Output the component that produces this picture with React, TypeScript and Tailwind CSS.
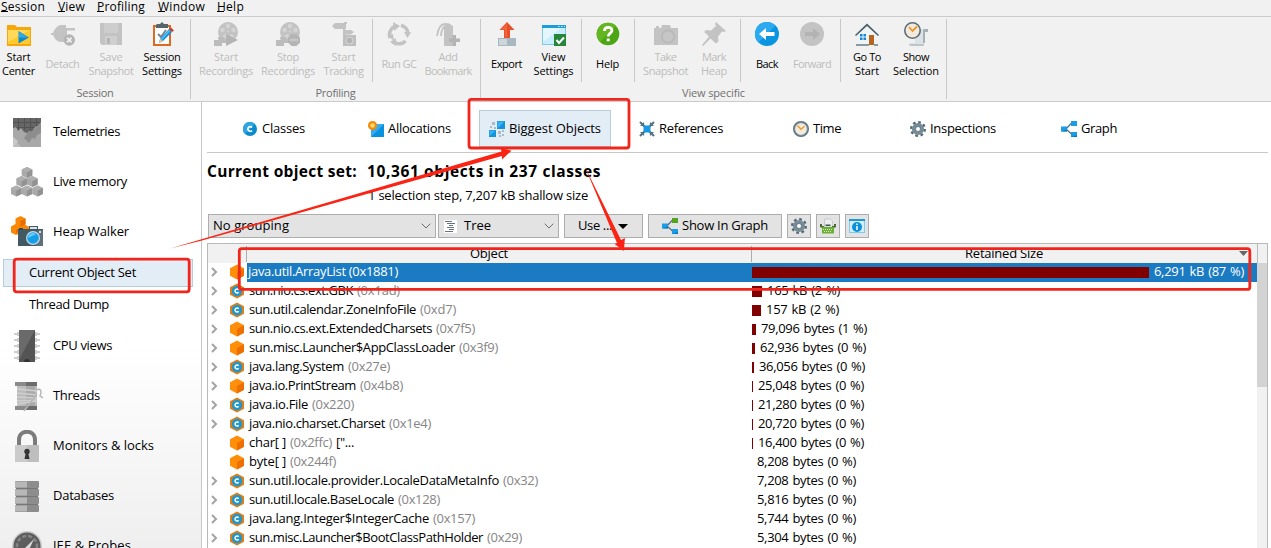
import { useLayoutEffect, useRef, useState, type ReactNode } from "react";

/** Single line of text whose tracking is set so that it fills `w` pixels. */
function T({ w, children, className = "" }: { w: number; children: string; className?: string }) {
  const ref = useRef<HTMLSpanElement>(null);
  const [spacing, setSpacing] = useState(0);
  useLayoutEffect(() => {
    const el = ref.current;
    if (!el) return;
    el.style.letterSpacing = "0px";
    const natural = el.getBoundingClientRect().width;
    const s = (w - natural) / children.length;
    el.style.letterSpacing = `${s}px`;
    setSpacing(s);
  }, [w, children]);
  return (
    <span ref={ref} className={`inline-block whitespace-pre ${className}`} style={{ letterSpacing: `${spacing}px` }}>
      {children}
    </span>
  );
}

function Svg({ s = 24, box = 24, children }: { s?: number; box?: number; children: ReactNode }) {
  return (
    <svg width={s} height={s} viewBox={`0 0 ${box} ${box}`} className="block shrink-0">
      {children}
    </svg>
  );
}

/* ---------- ribbon icons ---------- */
const G = "#c3c3c3";
const GD = "#b4b4b4";

const StartCenter = () => (
  <Svg>
    <path d="M0 3h8l2 2h14v19H0z" fill="#f5a70c" />
    <path d="M1 8h22v14H1z" fill="#ffca2c" />
    <path d="M1 8h22L1 20z" fill="#ffd95a" />
    <path d="M11.500 9l10.500 6.500-10.500 6z" fill="#0c8ad0" />
    <path d="M12 10l9.500 5.500H12z" fill="#35a9e6" />
  </Svg>
);
const Detach = () => (
  <Svg>
    <path d="M0 11h2C4 6 7 3 10 3h5v3h9v2.500h-8v5h5V16h-6v4h-5c-3 0-6-2-8-7H0z" fill={G} />
    <circle cx="18.300" cy="18" r="5.700" fill={GD} />
    <path d="M16 15.700l4.600 4.600m0-4.600L16 20.300" stroke="#f0f0f0" strokeWidth="1.800" />
  </Svg>
);
const Save = () => (
  <Svg>
    <path d="M1 1h22v22H3l-2-2z" fill={G} />
    <path d="M5 1h14v10H5z" fill="#cdcdcd" />
    <path d="M6 14h12v9H6z" fill="#cfcfcf" />
    <path d="M8 16h3v6H8z" fill={GD} />
  </Svg>
);
const SessionSettings = () => (
  <Svg>
    <path d="M3 3h18v21H3z" fill="#dc6b20" />
    <path d="M5 5h14v17H5z" fill="#fff" />
    <path d="M7 2h3l2-2 2 2h4v4H6V3z" fill="#56646c" />
    <path d="M8 12l3 3 5-7" stroke="#77858f" strokeWidth="2" fill="none" />
    <path d="M9 21l1-4L19 7l3 3-9 9z" fill="#1593dc" />
    <path d="M10 18l9-10 1 1-9 10z" fill="#5cc0f3" />
    <path d="M19 7l2-1.500 3 3L22 10z" fill="#ce3e2e" />
    <path d="M9 21l1-4 3 2z" fill="#f2c08e" />
  </Svg>
);
const Reel = ({ stop }: { stop?: boolean }) => (
  <Svg>
    <circle cx="14" cy="10" r="10" fill={G} />
    <g fill="#d4d4d4">
      <circle cx="14" cy="4" r="2.200" />
      <circle cx="8.500" cy="8" r="2.200" />
      <circle cx="19.500" cy="8" r="2.200" />
      <circle cx="11" cy="14.500" r="2.200" />
      <circle cx="17.500" cy="14.500" r="2.200" />
      <circle cx="14" cy="9.500" r="1" />
    </g>
    <path d="M0 18h8v6H0zM4 15h6l3 6H5z" fill="#bcbcbc" />
    {stop ? (
      <>
        <path d="M15.500 12h5l3.500 3.500v5L20.500 24h-5L12 20.500v-5z" fill={GD} />
        <path d="M14 18h8" stroke="#d0d0d0" strokeWidth="2.500" strokeDasharray="1.500 .7" />
      </>
    ) : (
      <path d="M12 12l12 6-12 6z" fill={GD} />
    )}
  </Svg>
);
const Tracking = () => (
  <Svg>
    <path d="M0 4l3-3h9V0h3v2h-1v5h-1v1h6l3 2-3 2.500h-5V13h10v11H11V7H3z" fill={G} />
    <path d="M11 13h13v11H11z" fill="#bebebe" />
    <circle cx="17.500" cy="18.500" r="4" fill="#d0d0d0" />
    <circle cx="17.500" cy="18.500" r="2.700" fill={GD} />
  </Svg>
);
const Recycle = () => (
  <Svg>
    <g fill="none" stroke={G} strokeWidth="3.600">
      <path d="M3.200 16A9.200 9.200 0 0 1 8 4.200" />
      <path d="M14 3.300a9.200 9.200 0 0 1 7 8.700" />
      <path d="M18.500 19a9.200 9.200 0 0 1-12 1" />
    </g>
    <path d="M6 0l7 4-6 5zM17 10h7l-3.500 6zM0 13l6-1 1 7z" fill={G} />
    <path d="M9 16v8l-6-4z" fill={G} />
  </Svg>
);
const Bookmark = () => (
  <Svg>
    <path d="M1 14C2 7 4 2 9 2c3 0 4 2 4 4M5 14C5 8 8 3 11 4" fill="none" stroke={G} strokeWidth="1.800" />
    <path d="M8 5l4-4 5 3v20H8z" fill={G} />
    <path d="M16.500 13h3.500v3.500h4V20h-4v4h-3.500v-4H13v-3.500h3.500z" fill={GD} />
  </Svg>
);
const Export = () => (
  <Svg>
    <path d="M3 16h18v8H3z" fill="#a9b8c0" />
    <path d="M4 17h8v6H4z" fill="#cbd5da" />
    <path d="M12 0l7.500 8H15v8H9V8H4.500z" fill="#e8502b" />
    <path d="M12 1v14h-2V7.500H6z" fill="#f0663c" />
  </Svg>
);
const ViewSettings = () => (
  <Svg>
    <path d="M0 3h24v20H0z" fill="#7cc9ea" />
    <path d="M1 6h22v16H1z" fill="#c9edfb" />
    <path d="M1 6h18L1 20z" fill="#e4f7fe" />
    <path d="M0 3h24v3H0z" fill="#1c9cd8" />
    <path d="M16 4.500h1.500m1.500 0h1.500m1.500 0H23" stroke="#d5f0fb" />
    <path d="M12 12h12v12H12z" fill="#27863c" />
    <path d="M14.500 18l2.500 3 5-5.500" stroke="#fff" strokeWidth="2" fill="none" />
  </Svg>
);
const Help = () => (
  <Svg>
    <circle cx="12" cy="12" r="11.300" fill="#4ca512" />
    <path d="M12 .7A11.300 11.300 0 0 0 4 20L20 4a11 11 0 0 0-8-3.300z" fill="#63b61f" />
    <path d="M8.500 9c0-5 7.500-4.500 7.500-.5 0 2.500-3.800 2.800-3.800 6" stroke="#fff" strokeWidth="2.800" fill="none" />
    <path d="M10.700 16.500h3v2.800h-3z" fill="#fff" />
  </Svg>
);
const Camera = () => (
  <Svg>
    <path d="M0 6h7l1-3h8l1 3h7v17H0z" fill={G} />
    <circle cx="14" cy="14.500" r="7" fill="#b8b8b8" />
    <circle cx="14" cy="14.500" r="5.300" fill="#c6c6c6" />
    <path d="M2 4h3v2H2z" fill={G} />
  </Svg>
);
const Pin = () => (
  <Svg>
    <path d="M14 0l10 9-2 1-2-.500-4 5 .500 5-2.500 2-5.500-5L1 24l-1-1 7-8.500L2 10l2-2 5 .500 5-4.500-1-2z" fill={G} />
  </Svg>
);
const Nav = ({ off }: { off?: boolean }) => (
  <Svg>
    <circle cx="12" cy="12" r="12" fill={off ? "#c3c3c3" : "#0b95e0"} />
    {!off && <path d="M12 0A12 12 0 0 0 3.500 20.500l17-17A12 12 0 0 0 12 0z" fill="#2baaf0" />}
    <path
      d={off ? "M20 12l-7-6v4H5v4h8v4z" : "M4 12l7-6v4h8.500v4H11v4z"}
      fill={off ? "#b3b3b3" : "#fff"}
    />
  </Svg>
);
const House = () => (
  <Svg>
    <path d="M3 12l9-9 9 9v11H3z" fill="#eef3f6" />
    <path d="M0 13L12 1.500 24 13l-1 1L12 4 1 14z" fill="#4d5e68" />
    <path d="M5 12h6v6H5z" fill="#1886d0" />
    <path d="M8 12v6M5 15h6" stroke="#e2f2fb" strokeWidth="1" />
    <path d="M14 13h5v10h-5z" fill="#b7651e" />
    <path d="M1 22h13v2H1zM19 22h4v2h-4z" fill="#8a9aa3" />
  </Svg>
);
const ShowSelection = () => (
  <Svg>
    <path d="M11 7h13v3h-4v14H5v-3h6z" fill="#dde2e5" />
    <path d="M20 7h4v3h-3v11h-2V8z" fill="#a5b0b7" />
    <path d="M5 22h15v2H7z" fill="#bdc5ca" />
    <circle cx="8.500" cy="8.500" r="7.700" fill="#f2ebdd" stroke="#5d6d77" strokeWidth="1.600" />
    <path d="M5 5l3.500 4L13 4.500" stroke="#ef9425" strokeWidth="1.800" fill="none" />
  </Svg>
);

/* ---------- small icons ---------- */
const ClassDot = () => (
  <Svg s={14} box={14}>
    <circle cx="7" cy="7" r="7" fill="#0b8bcb" />
    <path d="M7 0a7 7 0 0 0-5 12L12 2a7 7 0 0 0-5-2z" fill="#2da5de" />
    <path d="M9 5.600A2.300 2.300 0 1 0 9 8.400" stroke="#fff" strokeWidth="1.700" fill="none" />
  </Svg>
);
const Allocations = () => (
  <Svg s={16} box={16}>
    <path d="M3 3h13v13H3z" fill="#0a92df" />
    <path d="M3 3h13L3 16z" fill="#35acef" />
    <circle cx="4.500" cy="4.500" r="4.500" fill="#f08b0c" />
    <circle cx="4.500" cy="4.500" r="2.300" fill="#ffda66" />
  </Svg>
);
const Biggest = () => (
  <Svg s={16} box={16}>
    <path d="M8 0h8v8H8zM0 9h7v7H0z" fill="#1393dd" />
    <path d="M8.500 .5h7L8.500 7.500zM.5 9.500h6L.5 15z" fill="#3db0ee" />
    <path d="M3 1h3v3H3zM1 5h2v2H1zM5 6h2v2H5zM9 10h3v3H9zM13 9h2v2h-2zM10 14h2v2h-2zM13 13h2v2h-2z" fill="#a9bac6" />
  </Svg>
);
const References = () => (
  <Svg s={16} box={16}>
    <path d="M1 1l14 14M15 1L1 15" stroke="#536e7c" strokeWidth="2" />
    <path d="M1.500 4.500h3v-3M11.500 1.500v3h3M14.500 11.500h-3v3M4.500 14.500v-3h-3" stroke="#536e7c" strokeWidth="1.200" fill="none" />
    <path d="M4.500 4.500h7v7h-7z" fill="#1599e4" />
  </Svg>
);
const Clock = () => (
  <Svg s={16} box={16}>
    <circle cx="8" cy="8" r="7" fill="#f2ecdf" stroke="#5d717d" strokeWidth="2" />
    <circle cx="8" cy="8" r="6.200" fill="none" stroke="#aab9c2" strokeWidth=".7" />
    <path d="M4.500 4.500L8 8.200l3.500-3" stroke="#f09a30" strokeWidth="1.500" fill="none" />
  </Svg>
);
const Gear = () => (
  <Svg s={16} box={16}>
    <circle cx="8" cy="8" r="6.800" stroke="#536772" strokeWidth="2.400" strokeDasharray="2.670" fill="none" />
    <circle cx="8" cy="8" r="4.200" fill="none" stroke="#788c97" strokeWidth="3.800" />
    <circle cx="8" cy="8" r="2.500" fill="#fff" stroke="#475c68" strokeWidth=".7" />
  </Svg>
);
const Graph = ({ green }: { green?: boolean }) => (
  <Svg s={16} box={16}>
    <path d="M10 2.500L5 8l6 5.500" stroke="#526e7c" strokeWidth="1.200" fill="none" />
    <path d="M0 5.500h6v5H0zM10 11h6v5h-6z" fill="#1a9de8" />
    <path d="M10 0h6v5h-6z" fill={green ? "#53a51d" : "#1a9de8"} />
    <path d="M0 10.500h6v-2zM10 16h6v-2z" fill="#087bbd" />
  </Svg>
);
const TreeIcon = () => (
  <svg width="13" height="13" viewBox="0 0 13 13" className="block">
    <path d="M0 0h13v13H0z" fill="#fff" />
    <path d="M1 1.500h7M3 3.500h8M5 5.500h4M3 7.500h7M5 9.500h5M1 11.500h8" stroke="#66767f" />
  </svg>
);
const Typewriter = () => (
  <Svg s={16} box={16}>
    <path d="M4.500 1h6l2 2v6h-8z" fill="#eceeef" stroke="#b0b8bb" strokeWidth=".6" />
    <path d="M0 6h2v2h2v2H2L0 9zM16 6h-2v2h-2v2h2l2-1z" fill="#4d6a3a" />
    <path d="M2 9h12v6.500H2z" fill="#6bb035" />
    <path d="M3 11.500h10M4 13.500h8" stroke="#d9efc6" strokeDasharray="1 1" />
    <path d="M5.500 6.500h5V8h-5z" fill="#475159" />
  </Svg>
);
const InfoIcon = () => (
  <Svg s={16} box={16}>
    <path d="M0 1h16v14H0z" fill="#83cae8" />
    <path d="M1 3h14v11H1z" fill="#d3eefa" />
    <path d="M0 1h16v2H0z" fill="#1d9ad6" />
    <circle cx="8" cy="9" r="5" fill="#0c90da" />
    <path d="M8 5.500v1.500M8 8v4" stroke="#fff" strokeWidth="1.500" />
  </Svg>
);
const Cube = ({ cls }: { cls?: boolean }) => (
  <svg width="14" height="16" viewBox="0 0 14 16" className="block shrink-0">
    <path d="M7 .5l7 3.700v7.600l-7 3.700-7-3.700V4.200z" fill={cls ? "#d9811f" : "#ff8f0a"} />
    {cls ? (
      <>
        <circle cx="7" cy="8" r="5.200" fill="#2396c9" />
        <path d="M8.600 6.700a2 2 0 1 0 0 2.600" stroke="#fff" strokeWidth="1.500" fill="none" />
      </>
    ) : (
      <path d="M14 4.200v7.600l-7 3.700V8z" fill="#ee6f00" />
    )}
  </svg>
);
const Down = () => (
  <svg width="10" height="6" viewBox="0 0 10 6" className="block">
    <path d="M.7 .7L5 5 9.300 .7" stroke="#6e6e6e" strokeWidth="1" fill="none" />
  </svg>
);

/* ---------- sidebar icons ---------- */
const Telemetries = () => (
  <Svg s={32} box={32}>
    <path d="M2 2h28v29H2z" fill="#666" />
    <path d="M2 6.500h28M2 11.500h28M7.500 2v12M13.500 2v12M19.500 2v12M25.500 2v12" stroke="#525252" />
    <path d="M2 12l3-1 2 4 3-3 3 4 3 1 3-2 2 1 3-5 3-1 3-4v25H2z" fill="#a8a8a8" />
    <path d="M13 22l5-7 3 1 4-5 5-4v10l-4 2-2 4-3-1-3 5z" fill="#8d8d8d" />
    <path d="M2 21l8 10H2z" fill="#bcbcbc" />
    <path d="M2 21l5 4-5 6z" fill="#c8c8c8" />
  </Svg>
);
function GreyCube({ x, y }: { x: number; y: number }) {
  return (
    <g transform={`translate(${x} ${y})`}>
      <path d="M5.300 0l5.300 2.500v6L5.300 11 0 8.500v-6z" fill="#a9a9a9" />
      <path d="M10.600 2.500v6L5.300 11V5z" fill="#929292" />
      <path d="M5.300 0l5.300 2.500L5.300 5 0 2.500z" fill="#b0b0b0" />
    </g>
  );
}
const LiveMemory = () => (
  <Svg s={32} box={32}>
    <GreyCube x={10.700} y={1} />
    <GreyCube x={5.300} y={10} />
    <GreyCube x={16} y={10} />
    <GreyCube x={0} y={19.500} />
    <GreyCube x={10.700} y={19.500} />
    <GreyCube x={21.300} y={19.500} />
  </Svg>
);
const HeapWalker = () => (
  <Svg s={32} box={32}>
    <path d="M9.500 0l5 2.500V9l4 2v6l-4.500 2-4.500-2-4.500 2L0 16.500v-6L4.500 8V2.500z" fill="#fc8706" />
    <path d="M14.500 2.500V8l-5 3V5zM9.500 12l-4.500 6v-4z" fill="#e66d00" />
    <path d="M18 13v-3h9v3h5v17H7V13z" fill="#425863" />
    <path d="M19 13v-2h7v2z" fill="#dce3e6" />
    <path d="M8 12h4v2H8z" fill="#334851" />
    <path d="M27 14h5v16h-7z" fill="#5c717b" />
    <circle cx="22" cy="22" r="7" fill="#c7dce7" />
    <circle cx="22" cy="22" r="5.800" fill="#159fe9" />
    <path d="M17 22a5 5 0 0 1 8-4z" fill="#6dccfa" />
    <circle cx="29" cy="16" r="1" fill="#fff" />
  </Svg>
);
const Cpu = () => (
  <Svg s={32} box={32}>
    {[4, 10, 16, 22, 28].map((y) => (
      <path key={y} d={`M3 ${y - 1}h3v-1h20v1h3v2h-3v1H6v-1H3z`} fill="#cfcfcf" />
    ))}
    <path d="M8 0h16v32H8z" fill="#545454" />
    <path d="M8 0h16L8 30z" fill="#6a6a6a" />
    <path d="M13 32a3 3 0 0 1 6 0z" fill="#333" />
  </Svg>
);
const Spool = () => (
  <Svg s={32} box={32}>
    <path d="M6 5h20v22H6z" fill="#bcbcbc" />
    <path d="M15 5h9v22h-9z" fill="#a9a9a9" />
    <path d="M6 9l20 2M6 13l20 2M6 17l20 1M6 21l20-1M6 24l20-3" stroke="#cfcfcf" strokeWidth="1.300" />
    <path d="M4 2h22v4H4zM4 26h22v4H4z" fill="#6c6c6c" />
    <path d="M4 2h11v4H4zM4 26h11v4H4z" fill="#8a8a8a" />
    <path d="M13 31l13-17M25 10c5-2 6 1 4 6l3 2" stroke="#b6b6b6" strokeWidth="1.500" fill="none" />
  </Svg>
);
const Lock = () => (
  <Svg s={32} box={32}>
    <path d="M8 17v-7C8-1 24-1 24 10v7" stroke="#7c7c7c" strokeWidth="4" fill="none" />
    <path d="M4 15h24v17H4z" fill="#cbcbcb" />
    <path d="M16 15h12v17H16z" fill="#bebebe" />
    <circle cx="16" cy="21.500" r="2.700" fill="#333" />
    <path d="M15 22h2l1.500 7h-5z" fill="#333" />
  </Svg>
);
const Database = () => (
  <Svg s={32} box={32}>
    {[1, 9, 17, 25].map((y) => (
      <g key={y}>
        <rect x="4" y={y} width="24" height="7" rx="1" fill="#8d8d8d" />
        <path d={`M4 ${y + 0.5}h12v6H4z`} fill="#b7b7b7" />
      </g>
    ))}
    <path d="M5 8.500h22M5 16.500h22M5 24.500h22" stroke="#777" />
  </Svg>
);
const Gauge = () => (
  <Svg s={32} box={32}>
    <circle cx="16" cy="16" r="15" fill="#cacaca" />
    <circle cx="16" cy="16" r="13.500" fill="#5d5d5d" />
    <circle cx="16" cy="16" r="10" fill="none" stroke="#858585" strokeWidth="2.500" strokeDasharray="4 2" />
    <path d="M13 19l10-10-5 11z" fill="#d8d8d8" />
  </Svg>
);

/* ---------- ribbon ---------- */
type Line = [string, number];
function Cell({ w, icon, lines, off }: { w: string; icon: ReactNode; lines: Line[]; off?: boolean }) {
  return (
    <div className={`flex shrink-0 flex-col items-center pt-[5px] ${w} ${off ? "text-[#bcbcbc]" : "text-black"}`}>
      {icon}
      <div className="flex h-[36px] flex-col items-center justify-center text-[11px] leading-[14px]">
        {lines.map(([t, n]) => (
          <T key={t} w={n}>{t}</T>
        ))}
      </div>
    </div>
  );
}
const Sep = () => <div className="mt-[2px] h-[63px] w-px shrink-0 bg-[#c8c8c8]" />;
function Group({ w, label, lw, children }: { w: string; label: string; lw: number; children: ReactNode }) {
  return (
    <div className={`flex shrink-0 flex-col ${w}`}>
      <div className="flex h-[67px]">{children}</div>
      <div className="flex h-[16px] items-center justify-center pt-px text-[11px] leading-[15px] text-[#707070]">
        <T w={lw}>{label}</T>
      </div>
    </div>
  );
}
const LongSep = () => <div className="mt-[2px] h-[80px] w-px shrink-0 bg-[#c8c8c8]" />;

function Ribbon() {
  return (
    <div className="flex h-[86px] shrink-0 border-y border-[#cbcbcb] bg-[#f1f1f1]">
      <Group w="w-[190px]" label="Session" lw={37}>
        <Cell w="w-[37px]" icon={<StartCenter />} lines={[["Start", 24], ["Center", 33]]} />
        <Cell w="w-[51px]" off icon={<Detach />} lines={[["Detach", 34]]} />
        <Cell w="w-[46px]" off icon={<Save />} lines={[["Save", 23], ["Snapshot", 45]]} />
        <Cell w="w-[56px]" icon={<SessionSettings />} lines={[["Session", 37], ["Settings", 40]]} />
      </Group>
      <LongSep />
      <Group w="w-[289px]" label="Profiling" lw={40}>
        <Cell w="w-[70px]" off icon={<Reel />} lines={[["Start", 24], ["Recordings", 54]]} />
        <Cell w="w-[54px]" off icon={<Reel stop />} lines={[["Stop", 22], ["Recordings", 54]]} />
        <Cell w="w-[57px]" off icon={<Tracking />} lines={[["Start", 24], ["Tracking", 40]]} />
        <Sep />
        <Cell w="w-[52px]" off icon={<Recycle />} lines={[["Run GC", 35]]} />
        <Cell w="w-[46px]" off icon={<Bookmark />} lines={[["Add", 19], ["Bookmark", 47]]} />
      </Group>
      <LongSep />
      <Group w="w-[465px]" label="View specific" lw={63}>
        <Cell w="w-[51px]" icon={<Export />} lines={[["Export", 31]]} />
        <Cell w="w-[49px] pr-[6px]" icon={<ViewSettings />} lines={[["View", 24], ["Settings", 40]]} />
        <Sep />
        <Cell w="w-[52px] pr-px" icon={<Help />} lines={[["Help", 23]]} />
        <Sep />
        <Cell w="w-[61px]" off icon={<Camera />} lines={[["Take", 22], ["Snapshot", 45]]} />
        <Cell w="w-[44px] pr-[8px]" off icon={<Pin />} lines={[["Mark", 24], ["Heap", 26]]} />
        <Sep />
        <Cell w="w-[52px]" icon={<Nav />} lines={[["Back", 22]]} />
        <Cell w="w-[47px] pr-[9px]" off icon={<Nav off />} lines={[["Forward", 38]]} />
        <Sep />
        <Cell w="w-[52px]" icon={<House />} lines={[["Go To", 28], ["Start", 24]]} />
        <Cell w="w-[46px]" icon={<ShowSelection />} lines={[["Show", 26], ["Selection", 46]]} />
      </Group>
      <LongSep />
    </div>
  );
}

function MenuItem({ t, w, m }: { t: string; w: number; m: string }) {
  return (
    <div className={`relative flex h-[14px] ${m}`}>
      <T w={w}>{t}</T>
      <span className="absolute bottom-[2px] left-0 h-px w-[7px] bg-black" />
    </div>
  );
}

/* ---------- sidebar ---------- */
function Side({ icon, t, w }: { icon: ReactNode; t: string; w: number }) {
  return (
    <div className="flex h-[50px] shrink-0 items-center gap-[10px] pl-[11px]">
      {icon}
      <T w={w}>{t}</T>
    </div>
  );
}
function Sidebar() {
  return (
    <div className="flex w-[202px] shrink-0 flex-col overflow-hidden border-r border-[#c8c8c8] bg-linear-to-b from-white from-55% to-[#efefef] pt-[5px] text-[13px]">
      <Side icon={<Telemetries />} t="Telemetries" w={67} />
      <Side icon={<LiveMemory />} t="Live memory" w={74} />
      <Side icon={<HeapWalker />} t="Heap Walker" w={76} />
      <div className="mx-[3px] my-[2px] flex h-[28px] w-[190px] shrink-0 items-center border border-[#b5ceda] bg-[#e3edf6] pl-[25px]">
        <T w={107}>Current Object Set</T>
      </div>
      <div className="flex h-[32px] shrink-0 items-center pl-[29px]">
        <T w={80}>Thread Dump</T>
      </div>
      <Side icon={<Cpu />} t="CPU views" w={59} />
      <Side icon={<Spool />} t="Threads" w={47} />
      <Side icon={<Lock />} t="Monitors & locks" w={101} />
      <Side icon={<Database />} t="Databases" w={61} />
      <Side icon={<Gauge />} t="JEE & Probes" w={78} />
    </div>
  );
}

/* ---------- main panel ---------- */
function Tab({ icon, t, w, cls }: { icon: ReactNode; t: string; w: number; cls: string }) {
  return (
    <div className={`flex h-[37px] shrink-0 items-center gap-[4px] ${cls}`}>
      {icon}
      <T w={w}>{t}</T>
    </div>
  );
}

type Row = { n: string; nw: number; a?: string; aw?: number; cls?: boolean; leaf?: boolean; tail?: string; bar: number; s: string; sw: number };
const rows: Row[] = [
  { n: "java.util.ArrayList (0x1881)", nw: 150, bar: 397, s: "6,291 kB (87 %)", sw: 90 },
  { n: "sun.nio.cs.ext.GBK", nw: 104, a: "(0x1ad)", aw: 43, cls: true, bar: 10, s: "165 kB (2 %)", sw: 73 },
  { n: "sun.util.calendar.ZoneInfoFile", nw: 167, a: "(0xd7)", aw: 36, cls: true, bar: 9, s: "157 kB (2 %)", sw: 73 },
  { n: "sun.nio.cs.ext.ExtendedCharsets", nw: 183, a: "(0x7f5)", aw: 39, bar: 4, s: "79,096 bytes (1 %)", sw: 106 },
  { n: "sun.misc.Launcher$AppClassLoader", nw: 206, a: "(0x3f9)", aw: 39, bar: 3, s: "62,936 bytes (0 %)", sw: 106 },
  { n: "java.lang.System", nw: 95, a: "(0x27e)", aw: 42, cls: true, bar: 2, s: "36,056 bytes (0 %)", sw: 106 },
  { n: "java.io.PrintStream", nw: 107, a: "(0x4b8)", aw: 43, bar: 1, s: "25,048 bytes (0 %)", sw: 106 },
  { n: "java.io.File", nw: 59, a: "(0x220)", aw: 42, cls: true, bar: 1, s: "21,280 bytes (0 %)", sw: 106 },
  { n: "java.nio.charset.Charset", nw: 136, a: "(0x1e4)", aw: 42, cls: true, bar: 1, s: "20,720 bytes (0 %)", sw: 106 },
  { n: "char[ ]", nw: 37, a: "(0x2ffc)", aw: 42, leaf: true, tail: '["...', bar: 1, s: "16,400 bytes (0 %)", sw: 106 },
  { n: "byte[ ]", nw: 37, a: "(0x244f)", aw: 46, leaf: true, bar: 0, s: "8,208 bytes (0 %)", sw: 99 },
  { n: "sun.util.locale.provider.LocaleDataMetaInfo", nw: 250, a: "(0x32)", aw: 35, cls: true, bar: 0, s: "7,208 bytes (0 %)", sw: 99 },
  { n: "sun.util.locale.BaseLocale", nw: 145, a: "(0x128)", aw: 42, cls: true, bar: 0, s: "5,816 bytes (0 %)", sw: 99 },
  { n: "java.lang.Integer$IntegerCache", nw: 180, a: "(0x157)", aw: 42, cls: true, bar: 0, s: "5,744 bytes (0 %)", sw: 99 },
  { n: "sun.misc.Launcher$BootClassPathHolder", nw: 234, a: "(0x29)", aw: 35, cls: true, bar: 0, s: "5,304 bytes (0 %)", sw: 99 },
];

function TableRow({ r, sel }: { r: Row; sel: boolean }) {
  return (
    <div className="flex h-[19px] shrink-0">
      <div className="flex h-[18px] w-[39px] shrink-0 items-center pl-[3px]">
        <div className="w-[19px]">
          {!r.leaf && (
            <svg width="7" height="10" viewBox="0 0 7 10" className="block">
              <path d="M1 1l4 4-4 4" stroke="#a3a3a3" strokeWidth="2" fill="none" />
            </svg>
          )}
        </div>
        <Cube cls={r.cls} />
      </div>
      <div className={`flex grow items-center ${sel ? "bg-[#1b7bc2] text-white" : ""}`}>
        <div className={`flex w-[505px] shrink-0 gap-[4px] pb-px ${sel ? "pl-[1px]" : "pl-[2px]"}`}>
          <T w={r.nw}>{r.n}</T>
          {r.a && <T w={r.aw ?? 40} className="text-[#858585]">{r.a}</T>}
          {r.tail && <T w={18}>{r.tail}</T>}
        </div>
        <div className="h-[11px] shrink-0 bg-[#800000]" style={{ width: `${r.bar}px` }} />
        <T w={r.sw} className="ml-[5px] pb-px [word-spacing:1px]">{r.s}</T>
      </div>
    </div>
  );
}

const btn = "flex h-[24px] shrink-0 items-center border border-[#adadad] bg-[#e3e3e3]";

function Main() {
  return (
    <div className="flex min-w-0 grow flex-col bg-white pl-[5px] pr-[3px] text-[13px]">
      <div className="flex h-[51px] shrink-0 border-b border-[#c8c8c8] pl-[36px] pt-[8px]">
        <Tab icon={<ClassDot />} t="Classes" w={43} cls="w-[125px] gap-[5px]" />
        <Tab icon={<Allocations />} t="Allocations" w={63} cls="w-[111px]" />
        <Tab icon={<Biggest />} t="Biggest Objects" w={92} cls="mr-[28px] w-[132px] border border-[#b5ceda] bg-[#e3edf6] pl-[9px]" />
        <Tab icon={<References />} t="References" w={64} cls="w-[154px]" />
        <Tab icon={<Clock />} t="Time" w={28} cls="w-[117px]" />
        <Tab icon={<Gear />} t="Inspections" w={66} cls="w-[151px]" />
        <Tab icon={<Graph />} t="Graph" w={36} cls="" />
      </div>
      <div className="flex h-[36px] shrink-0 items-center gap-[10px] pt-[2px] text-[15.500px] font-bold">
        <T w={150}>Current object set:</T>
        <T w={234}>10,361 objects in 237 classes</T>
      </div>
      <div className="flex h-[14px] shrink-0 items-center pl-[161px]">
        <T w={220}>1 selection step, 7,207 kB shallow size</T>
      </div>
      <div className="flex shrink-0 pl-px pt-[11px]">
        <div className={`${btn} w-[228px] justify-between pl-[4px] pr-[4px]`}>
          <T w={76}>No grouping</T>
          <Down />
        </div>
        <div className={`${btn} ml-[2px] w-[121px] pl-[5px] pr-[4px]`}>
          <TreeIcon />
          <T w={27} className="ml-[7px]">Tree</T>
          <div className="ml-auto"><Down /></div>
        </div>
        <div className={`${btn} ml-[5px] w-[79px] gap-[6px] pl-[13px]`}>
          <T w={34}>Use ...</T>
          <svg width="10" height="5" viewBox="0 0 10 5"><path d="M0 0h10L5 5z" fill="#000" /></svg>
        </div>
        <div className={`${btn} ml-[5px] w-[134px] gap-[4px] pl-[13px]`}>
          <Graph green />
          <T w={86}>Show In Graph</T>
        </div>
        <div className={`${btn} ml-[5px] w-[24px] justify-center`}><Gear /></div>
        <div className={`${btn} ml-[5px] w-[24px] justify-center`}><Typewriter /></div>
        <div className={`${btn} ml-[5px] w-[24px] justify-center`}><InfoIcon /></div>
      </div>
      <div className="mt-[5px] flex min-h-0 grow overflow-hidden border-x border-t border-[#b9b9b9]">
        <div className="flex grow flex-col">
          <div className="flex h-[19px] shrink-0 items-center bg-[#f1f1f1]">
            <div className="h-[16px] w-[39px] shrink-0 border-r border-[#adadad]" />
            <div className="flex h-[16px] w-[505px] shrink-0 items-center justify-center border-r border-[#adadad] pr-[20px]">
              <T w={38}>Object</T>
            </div>
            <div className="flex grow items-center pl-[213px] pr-[9px]">
              <T w={78}>Retained Size</T>
              <svg width="9" height="5" viewBox="0 0 9 5" className="ml-auto"><path d="M0 0h9L4.500 5z" fill="#666" /></svg>
            </div>
          </div>
          {rows.map((r, i) => (
            <TableRow key={r.n} r={r} sel={i === 0} />
          ))}
        </div>
        <div className="flex w-[10px] shrink-0 flex-col bg-[#f1f1f1]">
          <div className="h-[19px] border-l border-[#b9b9b9]" />
          <div className="h-[124px] bg-[#d3d3d3]" />
        </div>
      </div>
    </div>
  );
}

function Annotations() {
  return (
    <svg width="1271" height="548" viewBox="0 0 1271 548" className="pointer-events-none absolute left-0 top-0">
      <g fill="none" stroke="#f0261c" strokeWidth="2.800">
        <rect x="14.200" y="259.200" width="175" height="32.600" rx="2.500" />
        <rect x="469" y="99.300" width="160" height="48.700" rx="2.500" />
        <rect x="239.300" y="248.700" width="1010.500" height="40.700" rx="2.500" />
      </g>
      <g fill="#fb2414">
        <path d="M170 248.500L501.500 151.500l-1-3.500 11 2.700-9.500 8.800-.2-3.500L202 240.500z" />
        <path d="M584.300 165.500L621 240l4-2-1.300 13-9-7 2.300-1z" />
      </g>
    </svg>
  );
}

export default function App() {
  return (
    <div className="relative flex h-[548px] w-[1271px] flex-col overflow-hidden bg-white font-['Open_Sans','Noto_Sans',sans-serif] text-black">
      <div className="flex h-[16px] shrink-0 items-start bg-[#f1f1f1] pl-px text-[12px] leading-[13px]">
        <MenuItem t="Session" w={44} m="" />
        <MenuItem t="View" w={27} m="ml-[13px]" />
        <MenuItem t="Profiling" w={48} m="ml-[12px]" />
        <MenuItem t="Window" w={47} m="ml-[13px]" />
        <MenuItem t="Help" w={27} m="ml-[12px]" />
      </div>
      <Ribbon />
      <div className="flex min-h-0 grow">
        <Sidebar />
        <Main />
      </div>
      <Annotations />
    </div>
  );
}
